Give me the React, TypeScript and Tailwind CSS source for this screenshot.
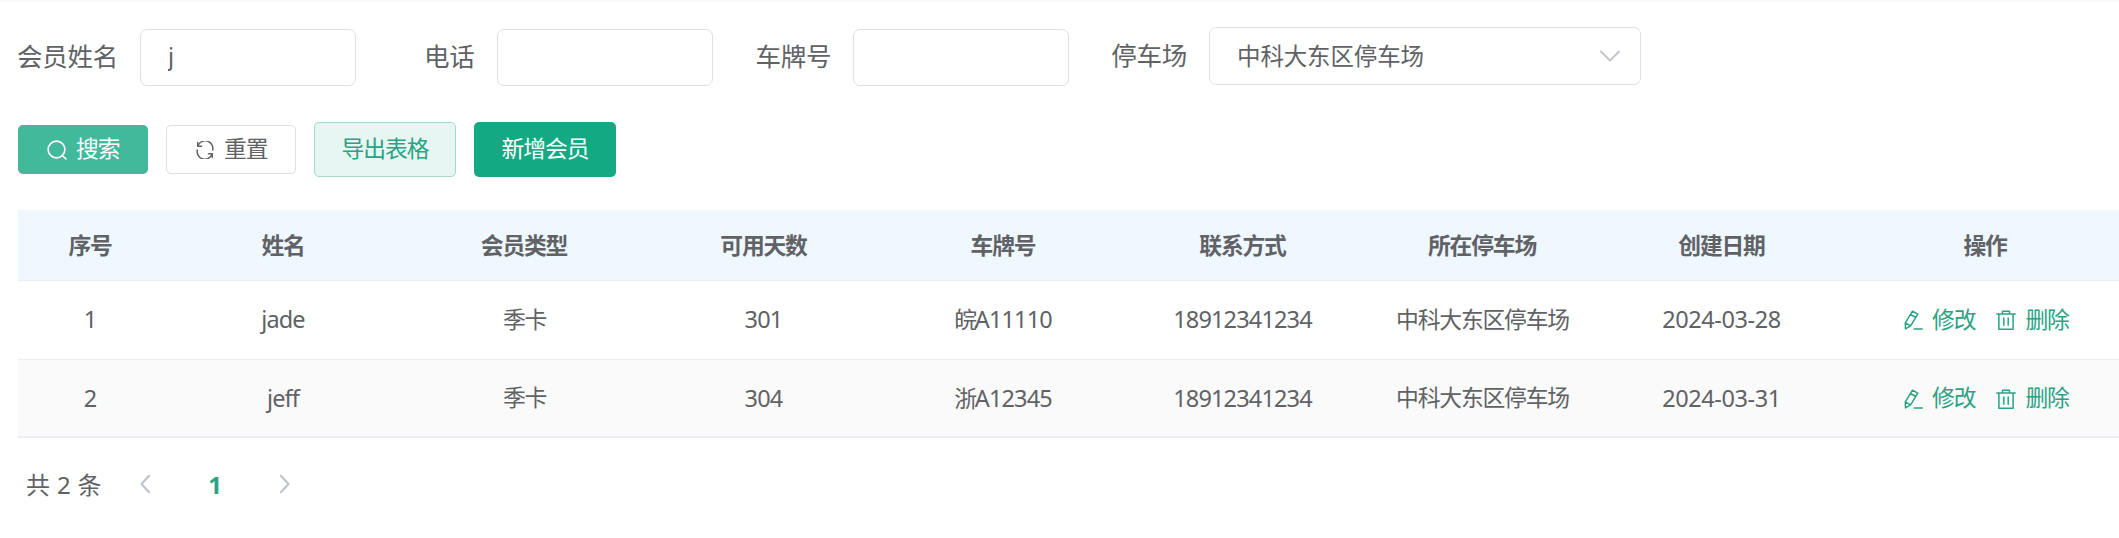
import type { ReactNode } from "react";

type Member = {
  id: number;
  name: string;
  type: string;
  days: number;
  region: string;
  plate: string;
  phone: string;
  lot: string;
  created: string;
};

const members: Member[] = [
  { id: 1, name: "jade", type: "季卡", days: 301, region: "皖", plate: "A11110", phone: "18912341234", lot: "中科大东区停车场", created: "2024-03-28" },
  { id: 2, name: "jeff", type: "季卡", days: 304, region: "浙", plate: "A12345", phone: "18912341234", lot: "中科大东区停车场", created: "2024-03-31" },
];

const headers = ["序号", "姓名", "会员类型", "可用天数", "车牌号", "联系方式", "所在停车场", "创建日期", "操作"];

const columns = "grid grid-cols-[144px_242px_240px_239px_240px_239px_240px_239px_288px] items-center text-center";

function SearchIcon() {
  return (
    <svg viewBox="0 0 20 20" className="h-5 w-5" fill="none" stroke="currentColor" strokeWidth="1.6" strokeLinecap="round">
      <circle cx="9.5" cy="9.5" r="8.4" />
      <path d="M15.800 16l3.200 3" />
    </svg>
  );
}

function RefreshIcon() {
  return (
    <svg viewBox="0 0 18 18" className="h-[18px] w-[18px]" fill="none" stroke="currentColor" strokeWidth="1.5" strokeLinecap="round" strokeLinejoin="round">
      <path d="M1.900 4.900A7.700 7.700 0 0 1 16.700 9" />
      <path d="M16.100 13.100A7.700 7.700 0 0 1 1.300 9" />
      <path d="M1.700 1.400v3.800h3.900M16.300 16.600v-3.800h-3.900" />
    </svg>
  );
}

function EditIcon() {
  return (
    <svg viewBox="0 0 20 20" className="h-5 w-5" fill="none" stroke="currentColor" strokeWidth="1.5" strokeLinecap="round" strokeLinejoin="round">
      <path d="M8.500 1.200l5.300 3-7.200 11.700-5.100 3-.200-6zM6.500 4.500l5.300 3M1.300 12.900l5.300 3M10.200 18.900h8" />
    </svg>
  );
}

function TrashIcon() {
  return (
    <svg viewBox="0 0 20 20" className="h-5 w-5" fill="none" stroke="currentColor" strokeWidth="1.5" strokeLinecap="round" strokeLinejoin="round">
      <path d="M.8 4h18.400M6.500 4V1.200h7V4M2.900 4v15.200h14.200V4M7.800 8v7.200M12.200 8v7.200" />
    </svg>
  );
}

function Chevron({ d, className }: { d: string; className: string }) {
  return (
    <svg viewBox="0 0 20 20" className={className} fill="none" stroke="currentColor" strokeLinecap="round" strokeLinejoin="round">
      <path d={d} />
    </svg>
  );
}

function Field({ label, labelClass, value }: { label: string; labelClass: string; value: string }) {
  return (
    <label className={"flex items-center " + labelClass}>
      <span className="-ml-px mr-[22px] pb-[4px] text-[25.500px] leading-[32px] tracking-[-0.25px]">{label}</span>
      <input
        defaultValue={value}
        className="h-[57px] w-[216px] rounded-[7px] border border-[#dcdfe6] bg-white px-[27px] pb-[4px] text-[23.500px] outline-none"
      />
    </label>
  );
}

function Cjk({ children }: { children: ReactNode }) {
  return <span className="-mr-px text-[22.800px] tracking-[-1.2px]">{children}</span>;
}

export default function App() {
  return (
    <div className="h-[538px] w-[2119px] overflow-hidden border-t-2 border-[#fafafa] bg-white pl-[18px] font-['Noto_Sans','Noto_Sans_CJK_SC',sans-serif] text-[#606266]">
      <form className="flex h-[86px] items-start pt-[27px]">
        <Field label="会员姓名" labelClass="" value="j" />
        <Field label="电话" labelClass="ml-[69px]" value="" />
        <Field label="车牌号" labelClass="ml-[44px]" value="" />
        <span className="ml-[42px] mr-[22px] mt-[10px] text-[25.500px] leading-[32px] tracking-[-0.25px]">停车场</span>
        <button type="button" className="-mt-[2px] flex h-[58px] w-[432px] items-center justify-between rounded-[7px] border border-[#dcdfe6] pl-[27px] pr-[20px] text-[23.500px] tracking-[-0.15px]">
          <span className="pt-px">中科大东区停车场</span>
          <Chevron d="M.9 5.500l9.100 9 9.100-9" className="h-5 w-5 stroke-[1.800] text-[#c0c4cc]" />
        </button>
      </form>

      <div className="mt-[34px] flex h-[55px] items-center gap-[18px] text-[22.800px] tracking-[-1.1px]">
        <button className="flex h-[49px] w-[130px] items-center rounded-[5px] bg-[#43b99c] pl-[29px] text-white">
          <SearchIcon />
          <span className="ml-[9px]">搜索</span>
        </button>
        <button className="flex h-[49px] w-[130px] items-center rounded-[5px] border border-[#dcdfe6] pl-[29px]">
          <RefreshIcon />
          <span className="ml-[10px]">重置</span>
        </button>
        <button className="h-[55px] w-[142px] rounded-[5px] border border-[#a3d9ca] bg-[#e7f6f2] text-[#2aa384]">导出表格</button>
        <button className="h-[55px] w-[142px] rounded-[5px] bg-[#13a983] text-white">新增会员</button>
      </div>

      <div className="mt-[33px] w-[2111px]">
        <div className={columns + " h-[71px] border-b border-[#ebeef5] bg-[#eff7ff] pt-[2px] text-[22.800px] font-bold tracking-[-1.2px]"}>
          {headers.map((h) => (
            <span key={h}>{h}</span>
          ))}
        </div>
        {members.map((m, i) => (
          <div
            key={m.id}
            className={columns + " text-[23.500px] tracking-[-0.85px] " + (i === 0 ? "h-[79px] border-b border-[#ebeef5]" : "h-[78px] border-b-2 border-[#ebeef5] bg-[#fafafa] pt-px")}
          >
            <span>{m.id}</span>
            <span>{m.name}</span>
            <Cjk>{m.type}</Cjk>
            <span>{m.days}</span>
            <span>
              <Cjk>{m.region}</Cjk>
              {m.plate}
            </span>
            <span>{m.phone}</span>
            <Cjk>{m.lot}</Cjk>
            <span className="tracking-[-0.4px]">{m.created}</span>
            <span className="flex items-center pl-[63px] text-[#2aa384]">
              <EditIcon />
              <span className="ml-[8px] mr-[21px] text-[22.800px] tracking-[-1.1px]">修改</span>
              <TrashIcon />
              <span className="ml-[9px] text-[22.800px] tracking-[-1.1px]">删除</span>
            </span>
          </div>
        ))}
      </div>

      <div className="mt-[22px] flex h-[50px] items-center pl-[8px] text-[24px]">
        <span className="w-[109px] whitespace-nowrap [word-spacing:0.7px]">共 2 条</span>
        <Chevron d="M14 1.800L6.500 10l7.500 8.200" className="mb-[3px] h-5 w-5 stroke-[2.200] text-[#c0c4cc]" />
        <span className="ml-[50px] w-[20px] text-center font-bold text-[#2aa384]">1</span>
        <Chevron d="M6 1.800l7.500 8.200L6 18.200" className="mb-[3px] ml-[50px] h-5 w-5 stroke-[2.200] text-[#c0c4cc]" />
      </div>
    </div>
  );
}
